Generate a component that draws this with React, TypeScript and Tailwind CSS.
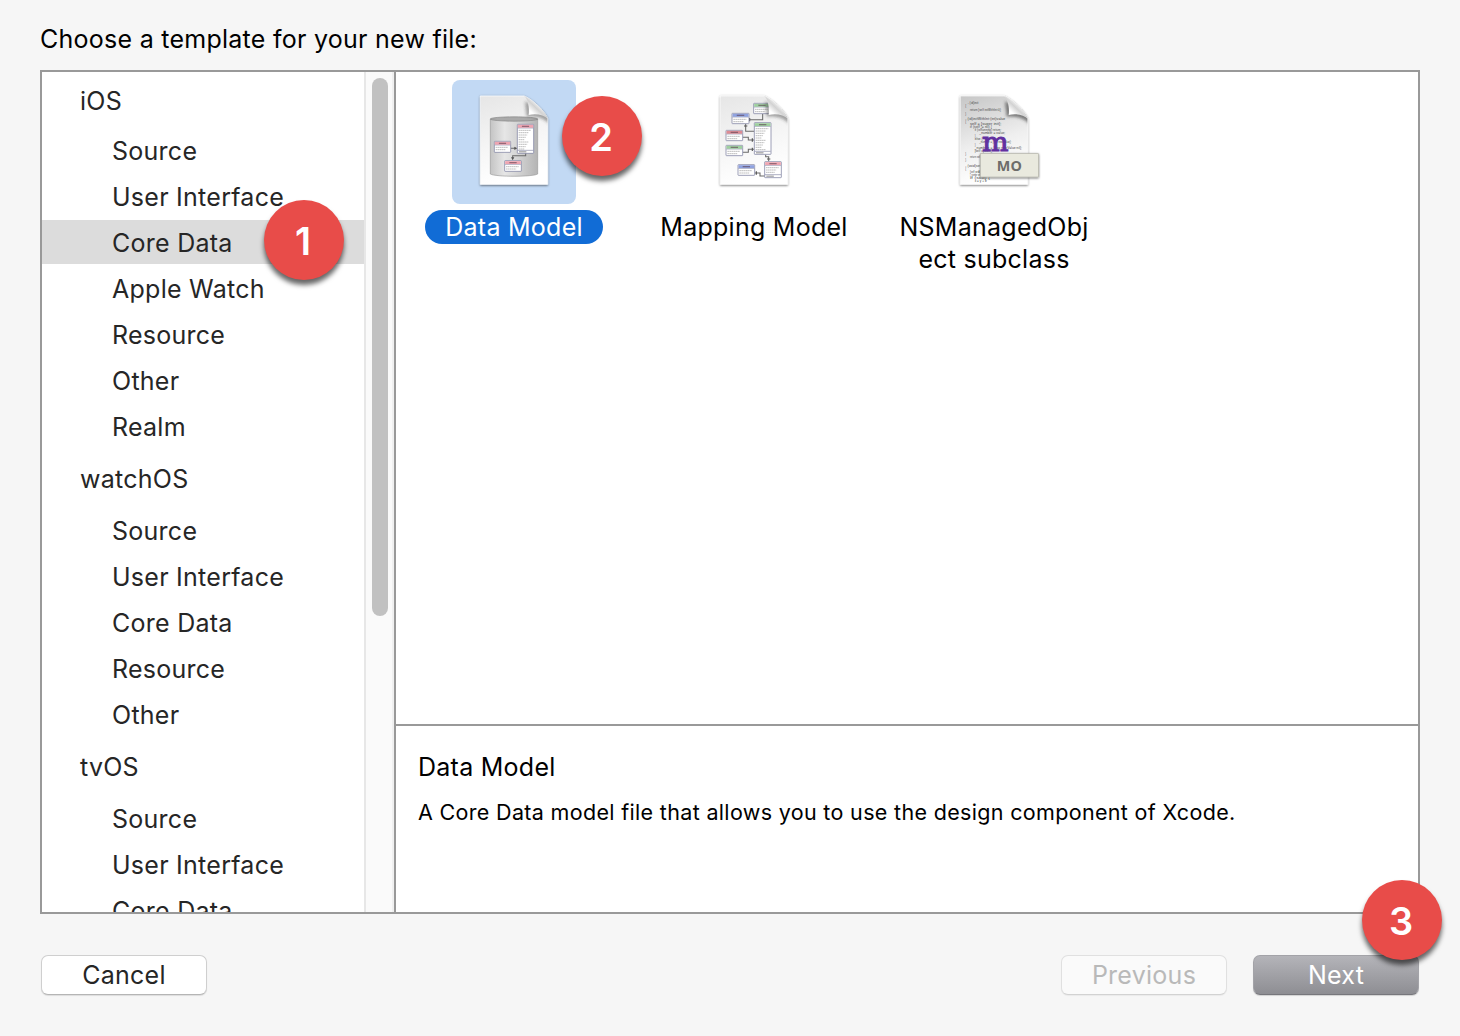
import type { ReactNode } from "react";

const groups = [
  { name: "iOS", items: ["Source", "User Interface", "Core Data", "Apple Watch", "Resource", "Other", "Realm"] },
  { name: "watchOS", items: ["Source", "User Interface", "Core Data", "Resource", "Other"] },
  { name: "tvOS", items: ["Source", "User Interface", "Core Data"] },
];

type TableProps = { x: number; y: number; w: number; h: number; color: string; foot?: boolean };

function Table({ x, y, w, h, color, foot }: TableProps) {
  const rows = Math.floor((h - (foot ? 22 : 14)) / 7);
  return (
    <g>
      <rect x={x} y={y} width={w} height={h} rx="1.5" fill="#fff" stroke="#8589a6" strokeWidth="2.4" />
      <rect x={x + 1.5} y={y + 1.5} width={w - 3} height="9" fill={color} />
      <path d={`M${x + w * 0.28} ${y + 6}h${w * 0.44}`} stroke="#5c3f50" strokeOpacity="0.6" strokeWidth="3.5" />
      <path d={`M${x + 1} ${y + 11.5}h${w - 2}`} stroke="#8589a6" strokeWidth="1.5" />
      {Array.from({ length: rows }, (_, i) => (
        <path
          key={i}
          d={`M${x + 4} ${y + 18 + i * 7}h${i === 0 ? w - 12 : w * (0.34 + ((i * 3) % 4) * 0.09)}`}
          stroke="#777"
          strokeOpacity="0.6"
          strokeWidth="2.4"
          strokeDasharray="5 1"
        />
      ))}
      {foot && <path d={`M${x + 1} ${y + h - 9}h${w - 2}`} stroke="#8589a6" strokeWidth="2" />}
      {foot && <path d={`M${x + 5} ${y + h - 4.5}h${w * 0.45}`} stroke="#777" strokeWidth="2.5" />}
    </g>
  );
}

function Page({ id, children, over, dark }: { id: string; children: ReactNode; over?: ReactNode; dark?: boolean }) {
  return (
    <svg viewBox="-3 6 270 312" className="h-[104px] w-[90px] overflow-visible">
      <defs>
        <linearGradient id={`${id}-paper`} x1="0" y1="0" x2="0.25" y2="1">
          <stop offset="0" stopColor={dark ? "#c6c6c6" : "#e6e6e6"} />
          <stop offset="0.6" stopColor={dark ? "#efefef" : "#f6f6f6"} />
          <stop offset="1" stopColor="#fff" />
        </linearGradient>
        <linearGradient id={`${id}-curl`} gradientUnits="userSpaceOnUse" x1="176" y1="84" x2="204" y2="54">
          <stop offset="0" stopColor="#fff" />
          <stop offset="0.35" stopColor="#fff" />
          <stop offset="0.8" stopColor="#d2d2d2" />
          <stop offset="1" stopColor="#e6e6e6" />
        </linearGradient>
        <linearGradient id={`${id}-can`} x1="0" x2="1">
          <stop offset="0" stopColor="#c4c4c4" />
          <stop offset="0.3" stopColor="#e6e6e6" />
          <stop offset="0.65" stopColor="#cfcfcf" />
          <stop offset="1" stopColor="#b4b4b4" />
        </linearGradient>
        <filter id={`${id}-drop`} x="-20%" y="-20%" width="140%" height="140%">
          <feDropShadow dx="0" dy="2.5" stdDeviation="2.5" floodOpacity="0.6" />
        </filter>
        <filter id={`${id}-soft`} x="-50%" y="-50%" width="200%" height="200%">
          <feGaussianBlur stdDeviation="4" />
        </filter>
        <clipPath id={`${id}-clip`}>
          <path d="M31 24H162C184 32 224 68 233 92V289H31Z" />
        </clipPath>
      </defs>
      <path d="M31 24H162C184 32 224 68 233 92V289H31Z" fill={`url(#${id}-paper)`} stroke="#fff" strokeWidth="2" filter={`url(#${id}-drop)`} />
      <g clipPath={`url(#${id}-clip)`}>
        {children}
        <path d="M165 40L170 86C200 84 222 90 240 110V80Z" fill="#333" fillOpacity={dark ? 0.6 : 0.42} filter={`url(#${id}-soft)`} />
      </g>
      <path d="M162 24C174 32 179 60 176 81C198 76 222 80 234 94C226 68 184 32 162 24Z" fill={`url(#${id}-curl)`} />
      {over}
    </svg>
  );
}

const wire = { fill: "none", stroke: "#6a6a6a", strokeWidth: 3.2 };

function DataModelIcon() {
  return (
    <Page id="dm">
      <path d="M61 93V258C75 267 190 267 203 258V93Z" fill="url(#dm-can)" stroke="#9a9a9a" strokeWidth="2" />
      <ellipse cx="132" cy="93" rx="71" ry="6.5" fill="#aaa" stroke="#858585" strokeWidth="2" />
      <path {...wire} d="M122 181H136M167 196V203H128V212" />
      <path d="M133 176L142 181L133 186ZM123 208L128 217L133 208Z" fill="#555" />
      <Table x={73} y={160} w={49} h={33} color="#efa5b1" />
      <Table x={142} y={109} w={49} h={87} color="#efa5b1" foot />
      <Table x={104} y={218} w={50} h={32} color="#efa5b1" />
    </Page>
  );
}

function MappingModelIcon() {
  return (
    <Page id="mm">
      <path {...wire} d="M158 77V95H120M107 107V130H133M98 148H115V156H132M98 193H115V184H132M167 200V206H176V220M134 255H150V264H165" />
      <path d="M119 90V100M102 114H112M127 151V161M127 179V189M171 213H181M139 250V260" stroke="#555" strokeWidth="3.5" />
      <Table x={131} y={46} w={50} h={31} color="#9fd09f" />
      <Table x={66} y={76} w={51} h={31} color="#8fa2e0" />
      <Table x={133} y={104} w={50} h={95} color="#9fd09f" foot />
      <Table x={48} y={127} w={50} h={31} color="#dd8c94" />
      <Table x={48} y={172} w={50} h={31} color="#9fd09f" />
      <Table x={84} y={230} w={50} h={32} color="#8fa2e0" />
      <Table x={164} y={221} w={50} h={48} color="#efa5b1" foot />
    </Page>
  );
}

const code: [number, number, string, number][] = [
  [53, 48, "- (id)init", 32],
  [46, 57, "{", 3],
  [60, 69, "return [self initWithInt:0];", 94],
  [46, 80, "}", 3],
  [46, 95, "- (id)initWithInt:(int)value", 120],
  [46, 104, "{", 3],
  [60, 112, "self = [super init];", 94],
  [60, 121, "if (self != nil) {", 66],
  [74, 130, "if (isRunning) return;", 80],
  [88, 139, "_number = value;", 78],
  [74, 148, "}", 3],
  [74, 157, "else {", 24],
  [88, 166, "_number = [self newValue];", 96],
  [74, 175, "}", 3],
  [74, 184, "_numbers = [Foo newValue:nil];", 142],
  [74, 193, "[self update];", 54],
  [46, 201, "}", 3],
  [60, 210, "return self;", 34],
  [46, 219, "}", 3],
  [46, 237, "- (void)set", 46],
  [46, 246, "{", 3],
  [60, 255, "[self setA];", 34],
  [60, 265, "[_number set];", 34],
  [60, 274, "if (self) {", 60],
  [74, 283, "x = y + b", 36],
];

function ManagedObjectIcon() {
  return (
    <Page
      id="mo"
      dark
      over={
        <g>
          <text x="96" y="188" fontFamily="DejaVu Serif, serif" fontSize="80" textLength="80" lengthAdjust="spacingAndGlyphs" fill="#6230a0" stroke="#6230a0" strokeWidth="3">m</text>
          <rect x="91" y="197" width="174" height="70" fill="#e9e9de" stroke="#b5b5aa" strokeWidth="2" filter="url(#mo-drop)" />
          <text x="178" y="248" textAnchor="middle" fontFamily="Open Sans, sans-serif" fontWeight="700" fontSize="43" fill="#6d6d6a">MO</text>
        </g>
      }
    >
      <g fontFamily="Liberation Sans, sans-serif" fontSize="9.5" fill="#3c3c3c">
        {code.map(([x, y, line, w]) => (
          <text key={y} x={x} y={y} textLength={w} lengthAdjust="spacingAndGlyphs">{line}</text>
        ))}
      </g>
    </Page>
  );
}

function Badge({ n, className }: { n: number; className: string }) {
  return (
    <div className={`absolute z-10 flex size-20 items-center justify-center rounded-full bg-[#e84c49] pt-[2px] pr-[2px] text-[38px] leading-none font-semibold tracking-normal text-white shadow-[0_5px_5px_rgba(0,0,0,0.6)] ${className}`}>
      {n}
    </div>
  );
}

export default function App() {
  return (
    <div className="flex h-[1036px] w-[1460px] flex-col overflow-hidden bg-[#f6f6f6] px-10 font-['Inter',sans-serif] text-[25px] tracking-[0.26px] text-black">
      <h1 className="h-[70px] pt-[23px] leading-8">Choose a template for your new file:</h1>

      <div className="relative flex h-[844px] border-2 border-[#999]">
        <aside className="relative w-[322px] bg-white">
          <nav className="h-[840px] overflow-hidden pt-[6px] text-[#262626]">
            {groups.map((g, gi) => (
              <div key={g.name} className="mb-2">
                <div className={`${gi === 0 ? "h-[50px]" : "h-[52px]"} pl-[38px] leading-[46px]`}>{g.name}</div>
                <ul className="flex flex-col gap-[2px]">
                  {g.items.map((item) => (
                    <li
                      key={item}
                      className={`h-11 pl-[70px] leading-[46px] ${gi === 0 && item === "Core Data" ? "bg-[#dcdcdc]" : ""}`}
                    >
                      {item}
                    </li>
                  ))}
                </ul>
              </div>
            ))}
          </nav>
          <Badge n={1} className="top-[128px] left-[222px]" />
        </aside>
        <div className="w-[30px] border-r-2 border-l-2 border-r-[#f0f0f0] border-l-[#e7e7e7] bg-[#fafafa] pt-[6px] pl-[6px]">
          <div className="h-[538px] w-4 rounded-full bg-[#c1c1c1]" />
        </div>

        <main className="flex w-[1024px] flex-col border-l-2 border-[#999] bg-white">
          <section className="flex h-[652px] gap-1 pt-2">
            <div className="relative flex w-[236px] flex-col items-center gap-[6px]">
              <div className="flex size-[124px] items-center justify-center rounded-lg bg-[#c2d9f4]"><DataModelIcon /></div>
              <div className="h-[34px] w-[178px] rounded-full bg-[#116cd6] text-center leading-[35px] text-white">Data Model</div>
              <Badge n={2} className="top-4 left-[166px]" />
            </div>
            <div className="flex w-[236px] flex-col items-center gap-[6px]">
              <div className="flex size-[124px] items-center justify-center"><MappingModelIcon /></div>
              <div className="leading-[35px]">Mapping Model</div>
            </div>
            <div className="flex w-[236px] flex-col items-center gap-[6px]">
              <div className="flex size-[124px] items-center justify-center"><ManagedObjectIcon /></div>
              <div className="pt-[1px] text-center leading-8">NSManagedObj<br />ect subclass</div>
            </div>
          </section>
          <section className="flex-1 border-t-2 border-[#999] pt-[25px] pl-[22px]">
            <h2 className="leading-8">Data Model</h2>
            <p className="mt-[13px] text-[21.5px] leading-8 tracking-[0.33px]">A Core Data model file that allows you to use the design component of Xcode.</p>
          </section>
        </main>
        <Badge n={3} className="top-[808px] left-[1320px]" />
      </div>

      <footer className="flex pt-[41px] pr-[1px] pl-[1px]">
        <button className="h-10 w-[166px] rounded-[7px] border border-[#cfcfcf] border-b-[#b5b5b5] bg-white leading-[38px] text-[#262626] shadow-[0_1px_1px_rgba(0,0,0,0.1)]">Cancel</button>
        <button className="ml-auto h-10 w-[166px] rounded-[7px] border border-[#e0e0e0] border-b-[#d2d2d2] bg-[#fafafa] leading-[38px] text-[#b9b9b9] shadow-[0_1px_1px_rgba(0,0,0,0.05)]">Previous</button>
        <button className="ml-[26px] h-10 w-[166px] rounded-[7px] border border-[#a3a3a8] border-b-[#77777c] bg-linear-to-b from-[#b4b4b9] to-[#8e8e93] leading-[38px] text-white shadow-[0_1px_1px_rgba(0,0,0,0.15)]">Next</button>
      </footer>
    </div>
  );
}
